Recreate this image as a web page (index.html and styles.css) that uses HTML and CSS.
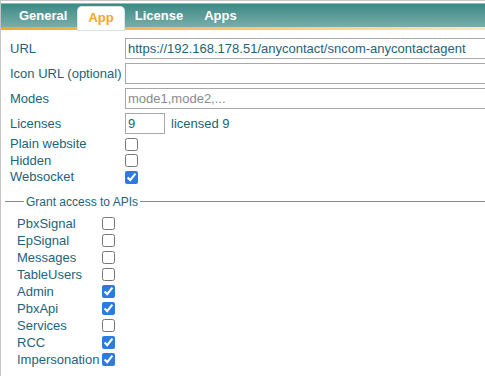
FILE: index.html
```html
<!DOCTYPE html>
<html lang="en">
<head>
    <meta charset="UTF-8">
    <title>App settings</title>
    <link rel="stylesheet" href="styles.css">
</head>
<body>
    <div class="frame">
        <!-- tab bar -->
        <div class="tabs">
            <span class="tab">General</span>
            <span class="tab active">App</span>
            <span class="tab">License</span>
            <span class="tab">Apps</span>
        </div>

        <form class="form">
            <div class="fields">
                <label>URL</label>
                <input class="text" type="text" value="https://192.168.178.51/anycontact/sncom-anycontactagent">
                <label>Icon URL (optional)</label>
                <input class="text" type="text" value="">
                <label>Modes</label>
                <input class="text" type="text" placeholder="mode1,mode2,...">
                <label>Licenses</label>
                <div class="licenses">
                    <input class="text small" type="text" value="9">
                    <span>licensed 9</span>
                </div>
            </div>

            <div class="checks">
                <label>Plain website</label><input type="checkbox">
                <label>Hidden</label><input type="checkbox">
                <label>Websocket</label><input type="checkbox" checked>
            </div>

            <fieldset class="apis">
                <legend>Grant access to APIs</legend>
                <div class="api-list">
                    <label>PbxSignal</label><input type="checkbox">
                    <label>EpSignal</label><input type="checkbox">
                    <label>Messages</label><input type="checkbox">
                    <label>TableUsers</label><input type="checkbox">
                    <label>Admin</label><input type="checkbox" checked>
                    <label>PbxApi</label><input type="checkbox" checked>
                    <label>Services</label><input type="checkbox">
                    <label>RCC</label><input type="checkbox" checked>
                    <label>Impersonation</label><input type="checkbox" checked>
                </div>
            </fieldset>
        </form>
    </div>
</body>
</html>
```

FILE: styles.css
```css
body, html {
    margin: 0;
    padding: 0;
    height: 100%;
    overflow: hidden;
    background: #fff;
}
body {
    font-family: 'Liberation Sans', Arial, sans-serif;
    font-size: 13px;
    color: #23637a;
    border-top: 1px solid #c4c4c4;
}
.frame {
    height: 100%;
    overflow: hidden;
    border-left: 1px solid #c4c4c4;
}
.tabs {
    display: flex;
    align-items: flex-start;
    gap: 1px;
    height: 26px;
    margin-top: 2px;
    padding-left: 8px;
    border-top: 1px solid #b0b0b0;
    background:
        linear-gradient(to right, #f4a52e, #fde6bb) bottom / 100% 3px no-repeat,
        linear-gradient(#3c8a85, #79ada9) top / 100% 23px no-repeat;
}
.tab {
    padding: 0 10px;
    height: 23px;
    line-height: 23px;
    font-weight: bold;
    color: #fff;
}
.tab.active {
    margin-top: 3px;
    line-height: 22px;
    background: #fff;
    color: #f5a623;
    border-radius: 4px 4px 0 0;
    box-shadow: 0 0 0 1px #d8e4e3;
}
.form {
    margin: 0;
    padding: 8px 0 0 9px;
}
.fields {
    display: grid;
    grid-template-columns: 115px 1fr;
    row-gap: 4px;
    align-items: center;
}
.text {
    box-sizing: border-box;
    height: 21px;
    width: calc(100% + 10px);
    margin: 0;
    padding: 0 2px;
    border: 1px solid #a9a9a9;
    border-radius: 0;
    font-family: inherit;
    font-size: 13px;
    color: #23637a;
    outline: none;
}
.text::placeholder {
    color: #8a8a8a;
}
.text.small {
    width: 40px;
}
.licenses {
    display: flex;
    align-items: center;
    gap: 6px;
}
.checks {
    display: grid;
    grid-template-columns: 115px auto;
    justify-content: start;
    align-items: center;
    margin-top: 2px;
}
.checks label {
    line-height: 16.5px;
}
.api-list label {
    line-height: 17px;
}
input[type=checkbox] {
    width: 13px;
    height: 13px;
    margin: 0;
    accent-color: #2d7be0;
}
.apis {
    margin: 9px 0 0 -5px;
    padding: 6px 0 0 12px;
    border: none;
    border-top: 1px solid #5d9ea0;
}
.apis legend {
    padding: 0 2px;
    margin-left: 7px;
    font-size: 12px;
}
.api-list {
    display: grid;
    grid-template-columns: 85px auto;
    justify-content: start;
    align-items: center;
}
```
